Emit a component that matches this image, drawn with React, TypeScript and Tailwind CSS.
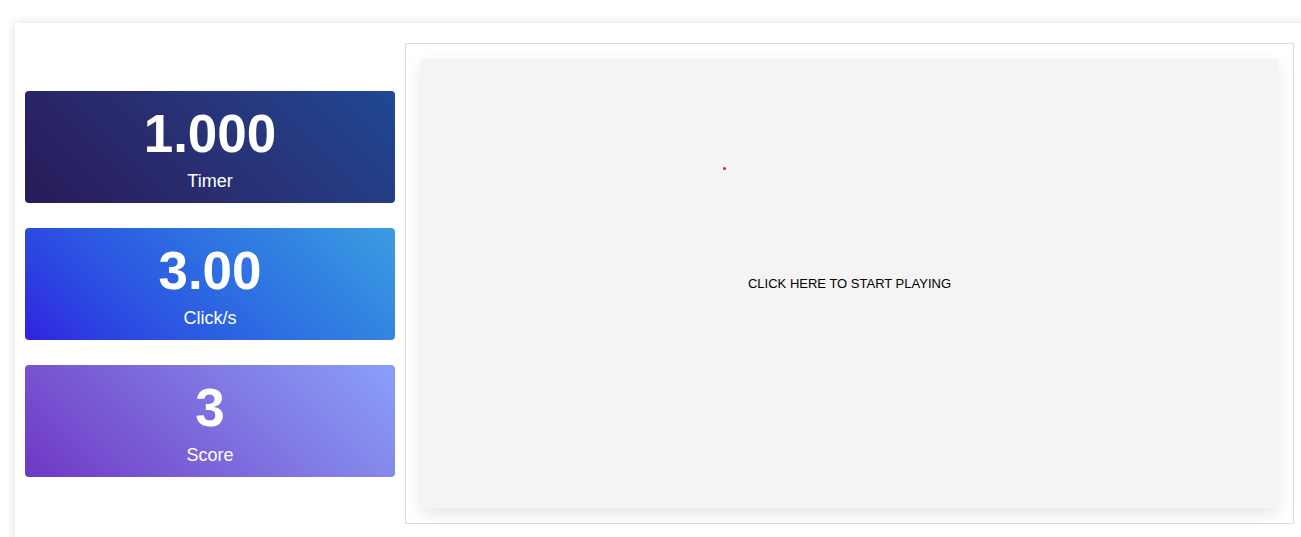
const stats = [
  { value: '1.000', label: 'Timer', className: 'bg-linear-45 from-[#281a58] to-[#1f4894]' },
  { value: '3.00', label: 'Click/s', className: 'bg-linear-45 from-[#301fe0] to-[#3c9ce0]' },
  { value: '3', label: 'Score', className: 'bg-linear-45 from-[#6f36c4] to-[#8aa0f8]' },
];

function StatBox({ value, label, className }: { value: string; label: string; className: string }) {
  return (
    <div className={`flex flex-col items-center rounded-[4px] pt-[13px] pb-[12px] text-white ${className}`}>
      <span className="text-[53px] font-bold leading-[60px]">{value}</span>
      <span className="mt-[7px] text-[18px] leading-[20px]">{label}</span>
    </div>
  );
}

export default function App() {
  return (
    <div
      className="h-[537px] w-[1301px] overflow-hidden bg-white pt-[23px] pl-[15px]"
      style={{ fontFamily: '"Liberation Sans", Arial, sans-serif' }}
    >
      <div className="flex w-[1300px] items-center gap-[10px] bg-white px-[10px] pt-[20px] pb-[20px] shadow-[0_0_10px_rgba(0,0,0,0.14)]">
        <div className="flex w-[370px] shrink-0 flex-col gap-[25px]">
          {stats.map((s) => (
            <StatBox key={s.label} {...s} />
          ))}
        </div>
        <div className="h-[481px] w-[889px] shrink-0 border border-[#dddddd] p-[15px]">
          <div className="relative flex h-full w-full cursor-pointer items-center justify-center bg-[#f4f4f4] shadow-[0_6px_16px_rgba(0,0,0,0.1)]">
            <span className="absolute left-[302px] top-[108px] h-[3px] w-[3px] rounded-full bg-[#f01818]" />
            <span className="text-[13px] text-black">CLICK HERE TO START PLAYING</span>
          </div>
        </div>
      </div>
    </div>
  );
}
